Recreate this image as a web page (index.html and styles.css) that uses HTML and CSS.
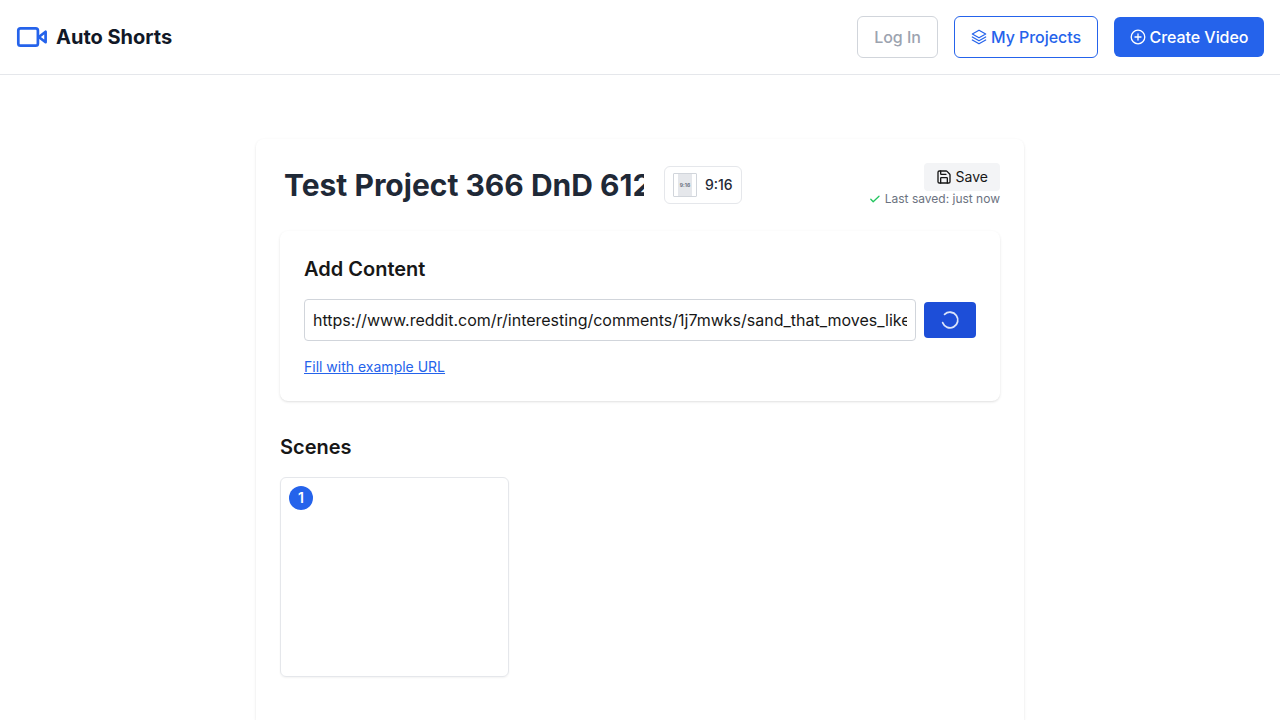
FILE: index.html
```html
<!DOCTYPE html>
<html lang="en">
<head>
<meta charset="utf-8">
<title>Auto Shorts</title>
<link rel="stylesheet" href="styles.css">
</head>
<body>
<header class="header">
  <a class="brand">
    <svg class="brand-icon" viewBox="0 0 32 32" fill="none" stroke="currentColor" stroke-width="2.7" stroke-linejoin="round"><rect x="2.3" y="7.3" width="19.6" height="17.4" rx="2.2"/><path d="M22.8 16 29.6 10.8V21.2Z"/></svg>
    <span>Auto Shorts</span>
  </a>
  <nav class="nav">
    <a class="btn btn-muted">Log In</a>
    <a class="btn btn-outline">
      <svg class="icon" viewBox="0 0 16 16" fill="none" stroke="currentColor" stroke-width="1.2" stroke-linejoin="round" stroke-linecap="round"><path d="M8 1.2 14.7 5 8 8.8 1.3 5Z"/><path d="M1.3 8 8 11.8 14.7 8"/><path d="M1.3 11 8 14.8 14.7 11"/></svg>
      <span>My Projects</span>
    </a>
    <a class="btn btn-primary">
      <svg class="icon" viewBox="0 0 16 16" fill="none" stroke="currentColor" stroke-width="1.3" stroke-linecap="round"><circle cx="8" cy="8" r="6.8"/><path d="M5 8h6M8 5v6"/></svg>
      <span>Create Video</span>
    </a>
  </nav>
</header>
<main class="main">
  <section class="editor">
    <div class="title-row">
      <div class="title-group">
        <h1 class="title">Test Project 366 DnD 6127</h1>
        <div class="ratio"><span class="ratio-box"><span class="ratio-fill">9:16</span></span><span>9:16</span></div>
      </div>
      <div class="save-group">
        <button class="save">
          <svg class="icon" viewBox="0 0 24 24" fill="none" stroke="currentColor" stroke-width="2" stroke-linecap="round" stroke-linejoin="round"><path d="M15.2 3a2 2 0 0 1 1.4.6l3.8 3.8a2 2 0 0 1 .6 1.4V19a2 2 0 0 1-2 2H5a2 2 0 0 1-2-2V5a2 2 0 0 1 2-2z"/><path d="M17 21v-7a1 1 0 0 0-1-1H8a1 1 0 0 0-1 1v7"/><path d="M7 3v4a1 1 0 0 0 1 1h7"/></svg>
          <span>Save</span>
        </button>
        <div class="saved">
          <svg class="check" viewBox="0 0 12 12" fill="none" stroke="currentColor" stroke-width="1.3" stroke-linecap="round" stroke-linejoin="round"><path d="M1.8 6.3 4.2 8.8 10 3.2"/></svg>
          <span>Last saved: just now</span>
        </div>
      </div>
    </div>
    <div class="content-card">
      <h2 class="heading">Add Content</h2>
      <div class="url-row">
        <div class="url"><span class="url-text">https://www.reddit.com/r/interesting/comments/1j7mwks/sand_that_moves_like_water/</span></div>
        <button class="submit"><svg class="spinner" viewBox="0 0 20 20" fill="none" stroke="currentColor" stroke-width="1.8" stroke-linecap="round"><path d="M4.6 4.4A7.8 7.8 0 1 1 2.7 12.7"/></svg></button>
      </div>
      <a class="example">Fill with example URL</a>
    </div>
    <h2 class="heading">Scenes</h2>
    <div class="scenes"><div class="scene"><span class="number">1</span></div></div>
  </section>
</main>
</body>
</html>
```

FILE: styles.css
```css
* { box-sizing: border-box; }
body {
  margin: 0;
  height: 720px;
  overflow: hidden;
  background: #fff;
  color: #171717;
  font: 16px/24px Inter, sans-serif;
}
h1, h2 { margin: 0; }
button { border: 0; padding: 0; font: inherit; color: inherit; }
svg { flex: none; display: block; }
.header {
  display: flex;
  align-items: center;
  justify-content: space-between;
  height: 75px;
  padding: 0 16px;
  border-bottom: 1px solid #e5e7eb;
}
.brand {
  display: flex;
  align-items: center;
  gap: 8px;
  color: #111827;
  font-size: 20px;
  line-height: 28px;
  font-weight: 700;
}
.brand-icon { width: 32px; height: 32px; color: #2563eb; }
.nav { display: flex; align-items: center; gap: 16px; }
.btn {
  display: flex;
  align-items: center;
  justify-content: center;
  gap: 4px;
  border-radius: 6px;
  height: 42px;
  font-weight: 500;
  letter-spacing: -.06px;
  white-space: nowrap;
}
.icon { width: 16px; height: 16px; }
.btn-muted { width: 81px; border: 1px solid #d1d5db; color: #9ca3af; }
.btn-outline { width: 144px; border: 1px solid #2563eb; color: #2563eb; }
.btn-primary { width: 150px; height: 40px; background: #2563eb; color: #fff; }
.main { padding: 64px 256px 0; }
.editor {
  height: 581px;
  padding: 24px;
  border-radius: 8px 8px 0 0;
  box-shadow: 0 1px 3px rgba(0, 0, 0, .1), 0 1px 2px -1px rgba(0, 0, 0, .1);
}
.title-row {
  display: flex;
  align-items: center;
  justify-content: space-between;
  height: 44px;
  margin-bottom: 24px;
}
.title-group { display: flex; align-items: center; gap: 20px; }
.title {
  width: 364px;
  padding-left: 4px;
  overflow: hidden;
  white-space: nowrap;
  color: #1f2937;
  font-size: 30px;
  line-height: 36px;
  font-weight: 700;
}
.ratio {
  display: flex;
  align-items: center;
  gap: 8px;
  width: 78px;
  height: 38px;
  padding: 0 8px;
  border: 1px solid #e5e7eb;
  border-radius: 6px;
  color: #1f2937;
  font-size: 14px;
  font-weight: 500;
}
.ratio-box {
  display: flex;
  justify-content: center;
  width: 24px;
  height: 24px;
  border: 1px solid #d1d5db;
  border-radius: 1px;
}
.ratio-fill {
  display: flex;
  align-items: center;
  justify-content: center;
  width: 14px;
  background: #e5e7eb;
  color: #6b7280;
  font-size: 5px;
  font-weight: 700;
}
.save-group { display: flex; flex-direction: column; align-items: flex-end; }
.save {
  display: flex;
  align-items: center;
  gap: 4px;
  height: 28px;
  padding: 0 12px;
  border-radius: 4px;
  background: #f3f4f6;
  font-size: 14px;
  line-height: 20px;
}
.saved {
  display: flex;
  align-items: center;
  gap: 4px;
  color: #6b7280;
  font-size: 12px;
  line-height: 16px;
}
.check { width: 12px; height: 12px; color: #22c55e; }
.content-card {
  height: 170px;
  margin-bottom: 32px;
  padding: 24px;
  border-radius: 8px;
  box-shadow: 0 1px 3px rgba(0, 0, 0, .1), 0 1px 2px -1px rgba(0, 0, 0, .1);
}
.heading { margin-bottom: 16px; font-size: 20px; line-height: 28px; font-weight: 600; }
.url-row { display: flex; align-items: center; gap: 8px; margin-bottom: 16px; }
.url {
  width: 612px;
  padding: 8px;
  border: 1px solid #d1d5db;
  border-radius: 4px;
}
.url-text { display: block; overflow: hidden; white-space: nowrap; }
.submit {
  display: flex;
  align-items: center;
  justify-content: center;
  width: 52px;
  height: 36px;
  border-radius: 4px;
  background: #1d4ed8;
  color: #dbe4fa;
}
.spinner { width: 20px; height: 20px; }
.example {
  display: block;
  color: #2563eb;
  font-size: 14px;
  line-height: 20px;
  text-decoration: underline;
}
.scenes { display: grid; grid-template-columns: repeat(3, 1fr); gap: 16px; }
.scene {
  height: 200px;
  padding: 8px;
  border: 1px solid #e5e7eb;
  border-radius: 6px;
  box-shadow: 0 1px 2px rgba(0, 0, 0, .05);
}
.number {
  display: flex;
  align-items: center;
  justify-content: center;
  width: 24px;
  height: 24px;
  border-radius: 50%;
  background: #2563eb;
  color: #fff;
  font-size: 14px;
  font-weight: 600;
}
```
